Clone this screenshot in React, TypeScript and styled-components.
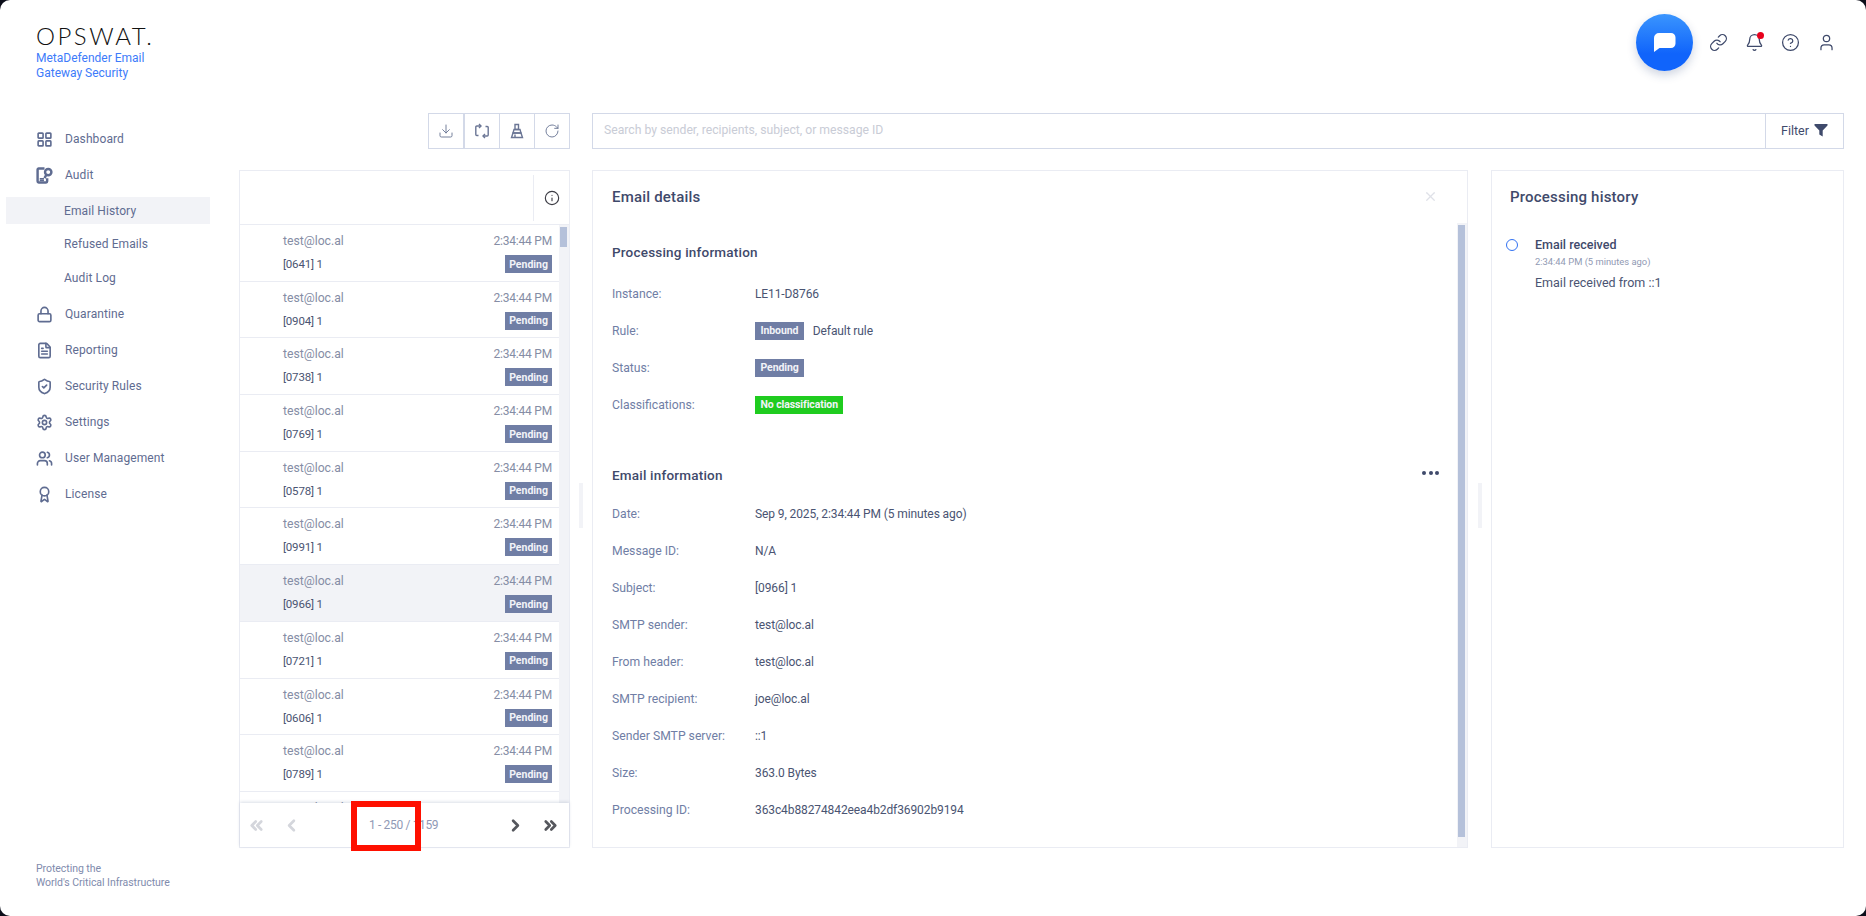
import React from 'react';
import styled, { createGlobalStyle } from 'styled-components';
import {
  LayoutGrid,
  Lock,
  FileText,
  ShieldCheck,
  Settings,
  Users,
  Award,
  Link,
  Bell,
  CircleHelp,
  User,
  Download,
  RotateCw,
  Info,
  X,
  ChevronLeft,
  ChevronRight,
  ChevronsLeft,
  ChevronsRight,
} from 'lucide-react';

const FONT = `Roboto, 'Liberation Sans', sans-serif`;

const GlobalStyle = createGlobalStyle`
  html, body { margin: 0; padding: 0; height: 100%; background: #0c0e1a; overflow: hidden; }
  * { box-sizing: border-box; }
  body { font-family: ${FONT}; }
`;

const Shell = styled.div`
  width: 1866px;
  height: 916px;
  background: #fff;
  border-radius: 10px;
  display: grid;
  grid-template-columns: 239px 1fr;
  overflow: hidden;
`;

/* sidebar */
const Sidebar = styled.aside`
  display: flex;
  flex-direction: column;
  height: 916px;
  padding: 0 29px 27px 6px;
`;

const Brand = styled.div`
  padding: 22px 0 0 30px;
  height: 121px;
`;

const BrandMark = styled.div`
  font-family: Lato, sans-serif;
  font-weight: 300;
  font-size: 24px;
  line-height: 28px;
  letter-spacing: 2.5px;
  color: #111;
  white-space: nowrap;
`;

const BrandProduct = styled.div`
  margin-top: 1px;
  font-size: 12px;
  line-height: 15px;
  color: #3d7bfa;
`;

const Nav = styled.nav`
  display: flex;
  flex-direction: column;
  flex: 1;
`;

const NavItem = styled.div`
  display: flex;
  align-items: center;
  gap: 12px;
  height: 36px;
  padding-left: 30px;
  font-size: 12px;
  color: #5f6c91;
  letter-spacing: 0.1px;
  svg { width: 17px; height: 17px; flex: none; stroke-width: 2.3; }
`;

const SubItem = styled.div<{ $active?: boolean }>`
  display: flex;
  align-items: center;
  height: 27px;
  margin: 0 0 6.5px;
  padding-left: 58px;
  font-size: 12px;
  color: #5f6c91;
  letter-spacing: 0.1px;
  background: ${(p) => (p.$active ? '#f2f3f7' : 'transparent')};
`;

const SubList = styled.div`
  display: flex;
  flex-direction: column;
  padding-top: 4px;
  margin-bottom: -1.5px;
`;

const Tagline = styled.div`
  padding-left: 30px;
  font-size: 10.5px;
  line-height: 13.5px;
  letter-spacing: -0.05px;
  color: #7f8bad;
`;

/* main */
const Main = styled.main`
  display: flex;
  flex-direction: column;
  height: 916px;
  padding-right: 22px;
  padding-bottom: 68px;
`;

const TopBar = styled.header`
  height: 113px;
  flex: none;
  display: flex;
  justify-content: flex-end;
  align-items: flex-start;
  padding-top: 14px;
`;

const ChatButton = styled.div`
  width: 57px;
  height: 57px;
  border-radius: 50%;
  background: linear-gradient(180deg, #3a95fe 0%, #1064fb 70%);
  box-shadow: 0 4px 10px rgba(30, 60, 120, 0.22);
  display: flex;
  align-items: center;
  justify-content: center;
  margin-right: 15px;
  svg { width: 23px; height: 21px; }
`;

const TopIcons = styled.div`
  display: flex;
  align-items: center;
  height: 57px;
  gap: 16px;
  padding-right: 8px;
`;

const TopIcon = styled.div`
  position: relative;
  width: 20px;
  height: 20px;
  display: flex;
  align-items: center;
  justify-content: center;
  color: #3f4a6b;
  svg { width: 19px; height: 19px; stroke-width: 1.6; }
`;

const NotifyDot = styled.span`
  position: absolute;
  top: -1px;
  right: 0;
  width: 7px;
  height: 7px;
  border-radius: 50%;
  background: #e8001c;
`;

const ToolRow = styled.div`
  display: grid;
  grid-template-columns: 331px 22px 1fr;
  height: 35px;
  flex: none;
  margin-bottom: 22px;
`;

const ToolGroup = styled.div`
  grid-column: 1;
  display: flex;
  justify-content: flex-end;
`;

const ToolButton = styled.div`
  width: 36px;
  height: 36px;
  border: 1px solid #d3d9e8;
  display: flex;
  align-items: center;
  justify-content: center;
  color: #6b7695;
  svg { width: 16px; height: 16px; stroke-width: 1.4; }
  & + & + & { margin-left: -1px; }
`;

const SearchBox = styled.div`
  grid-column: 3;
  display: flex;
  align-items: stretch;
  height: 36px;
  border: 1px solid #d3d9e8;
`;

const SearchText = styled.div`
  flex: 1;
  padding: 0 0 2px 11px;
  display: flex;
  align-items: center;
  font-size: 12.2px;
  color: #c9ccd6;
`;

const FilterButton = styled.div`
  width: 78px;
  padding-bottom: 2px;
  border-left: 1px solid #d3d9e8;
  display: flex;
  align-items: center;
  justify-content: center;
  gap: 5px;
  font-size: 12.5px;
  color: #3f4a6b;
  svg { width: 14px; height: 14px; }
`;

const Panels = styled.div`
  flex: 1;
  min-height: 0;
  display: grid;
  grid-template-columns: 331px 22px 1fr 23px 353px;
`;

const Panel = styled.section`
  border: 1px solid #eaecf3;
  min-height: 0;
  display: flex;
  flex-direction: column;
  position: relative;
`;

const Gutter = styled.div`
  display: flex;
  align-items: center;
  justify-content: center;
  padding-bottom: 8px;
  &::after {
    content: '';
    width: 4px;
    height: 45px;
    background: #f2f3f7;
  }
`;

/* list panel */
const ListHead = styled.div`
  height: 54px;
  flex: none;
  display: flex;
  justify-content: flex-end;
  align-items: center;
  border-bottom: 1px solid #eaecf3;
`;

const InfoCell = styled.div`
  width: 36px;
  height: 46px;
  border-left: 1px solid #eaecf3;
  display: flex;
  align-items: center;
  justify-content: center;
  color: #3d3d45;
  svg { width: 16px; height: 16px; stroke-width: 1.7; }
`;

const ListBody = styled.div`
  flex: 1;
  min-height: 0;
  display: grid;
  grid-template-columns: 1fr 10px;
  overflow: hidden;
`;

const Rows = styled.div`
  display: flex;
  flex-direction: column;
`;

const Row = styled.div<{ $selected?: boolean }>`
  height: 56.7px;
  flex: none;
  border-bottom: 1px solid #eaecf3;
  padding: 8px 7px 0 43px;
  display: grid;
  grid-template-columns: 1fr auto;
  grid-template-rows: 16px 30px;
  align-items: center;
  background: ${(p) => (p.$selected ? '#f2f3f7' : '#fff')};
`;

const RowSender = styled.div`
  font-size: 12.2px;
  color: #858da5;
`;

const RowTime = styled.div`
  font-size: 12px;
  letter-spacing: -0.2px;
  color: #858da5;
  text-align: right;
`;

const RowSubject = styled.div`
  font-size: 11.5px;
  letter-spacing: -0.2px;
  color: #4a5472;
`;

const Badge = styled.span<{ $green?: boolean }>`
  display: inline-flex;
  align-items: center;
  justify-content: center;
  height: 18px;
  padding: 0 5.5px;
  font-size: 10.5px;
  font-weight: 700;
  color: #f2f3f8;
  background: ${(p) => (p.$green ? '#1fcc1f' : '#707ea5')};
  white-space: nowrap;
`;

const RowBadge = styled(Badge)`
  justify-self: end;
  padding: 0 4px;
`;

const ScrollTrack = styled.div`
  background: #f2f3f7;
  padding: 2px 1px 0 1px;
`;

const ScrollThumb = styled.div<{ $h: number }>`
  width: 7px;
  height: ${(p) => p.$h}px;
  background: #b5c1da;
`;

const Pager = styled.footer`
  position: relative;
  flex: none;
  height: 44px;
  background: #fff;
  box-shadow: 0 -1px 3px rgba(112, 126, 165, 0.25);
  display: flex;
  align-items: center;
  padding: 0 9px 0 6px;
`;

const PagerIcon = styled.div<{ $off?: boolean; $gap?: number }>`
  width: 20px;
  display: flex;
  justify-content: center;
  color: ${(p) => (p.$off ? '#d4d6dc' : '#55575d')};
  margin-left: ${(p) => p.$gap ?? 0}px;
  svg { width: 19px; height: 19px; stroke-width: 3.4; }
`;

const PagerText = styled.div`
  position: absolute;
  left: 129px;
  top: 15px;
  font-size: 12px;
  letter-spacing: -0.35px;
  color: #8f99b5;
  white-space: nowrap;
`;

const Spacer = styled.div`
  flex: 1;
`;

const RedMark = styled.div`
  position: absolute;
  left: 111px;
  top: -2px;
  width: 70px;
  height: 50px;
  border: 6px solid #fe1000;
`;

/* details */
const PanelTitle = styled.h2`
  margin: 0;
  font-size: 15px;
  font-weight: 500;
  color: #3f4a6b;
  letter-spacing: 0.2px;
`;

const DetailsHead = styled.div`
  height: 52px;
  flex: none;
  display: flex;
  align-items: center;
  justify-content: space-between;
  padding: 0 29px 1px 19px;
  color: #dfe1e8;
  svg { width: 15px; height: 15px; }
`;

const DetailsBody = styled.div`
  flex: 1;
  min-height: 0;
  display: grid;
  grid-template-columns: 1fr 10px;
  overflow: hidden;
`;

const DetailsContent = styled.div`
  padding: 0 19px;
`;

const SectionHead = styled.div<{ $top: number; $bottom: number }>`
  display: flex;
  align-items: center;
  justify-content: space-between;
  height: 20px;
  margin-top: ${(p) => p.$top}px;
  margin-bottom: ${(p) => p.$bottom}px;
  font-size: 13.5px;
  font-weight: 500;
  color: #3f4a6b;
  letter-spacing: 0.2px;
`;

const MoreDots = styled.div`
  display: flex;
  gap: 2.5px;
  margin-right: -1px;
  margin-bottom: 4px;
  span {
    width: 4px;
    height: 4px;
    border-radius: 50%;
    background: #3f4a6b;
  }
`;

const InfoRow = styled.div`
  display: grid;
  grid-template-columns: 143px 1fr;
  align-items: center;
  height: 37px;
  font-size: 12.2px;
`;

const InfoLabel = styled.div`
  color: #707ea5;
`;

const InfoValue = styled.div`
  color: #4a5472;
  font-size: 12px;
  letter-spacing: -0.1px;
  display: flex;
  align-items: center;
  gap: 9px;
`;

/* history */
const HistoryHead = styled.div`
  height: 52px;
  flex: none;
  display: flex;
  align-items: center;
  padding: 0 18px 1px;
`;

const HistoryEvent = styled.div`
  display: grid;
  grid-template-columns: 29px 1fr;
  padding: 13px 14px 0;
`;

const EventDot = styled.span`
  width: 12px;
  height: 12px;
  margin-top: 3px;
  border-radius: 50%;
  border: 1.5px solid #3272f2;
`;

const EventTitle = styled.div`
  font-size: 12.5px;
  font-weight: 500;
  line-height: 18px;
  color: #3f4a6b;
`;

const EventTime = styled.div`
  font-size: 9.4px;
  line-height: 16px;
  color: #9099b3;
`;

const EventNote = styled.div`
  margin-top: 4px;
  font-size: 12.5px;
  line-height: 18px;
  color: #4a5472;
`;

const AuditIcon = () => (
  <svg viewBox="0 0 16 16" fill="none" stroke="currentColor" strokeWidth="1.6">
    <path d="M8 1.5H2.5a1 1 0 0 0-1 1v11a1 1 0 0 0 1 1h7a1 1 0 0 0 1-1v-3" />
    <circle cx="11.5" cy="4.8" r="3" />
    <path d="M9.6 7.5 8 10.5" />
    <path d="M3.5 11h4M3.5 12.8h4" strokeWidth="1.4" />
  </svg>
);

const SweepIcon = () => (
  <svg viewBox="0 0 16 16" fill="none" stroke="currentColor" strokeWidth="1.1">
    <path d="M6 1.500h3.500V6.500H6z" />
    <path d="M5 6.500h6l1 3.500H4z" />
    <path d="M4 10h8l1.500 4.500h-11z" />
    <path d="M6 11.500v3" />
  </svg>
);

const SwapIcon = () => (
  <svg viewBox="0 0 16 16" fill="none" stroke="currentColor" strokeWidth="1.2">
    <path d="M6.500 3H2.800a1 1 0 0 0-1 1v7.500a1 1 0 0 0 1 1h1.700" />
    <path d="M9.500 13h3.700a1 1 0 0 0 1-1V4.500a1 1 0 0 0-1-1h-1.700" />
    <path d="M5 1l2 2-2 2M11 11l-2 2 2 2" />
  </svg>
);

const FunnelIcon = () => (
  <svg viewBox="0 0 14 14" fill="currentColor">
    <path d="M0.500 1h13v1.500L8.700 7.500V13.500L5.300 11.500V7.500L0.500 2.500z" />
  </svg>
);

const ChatIcon = () => (
  <svg viewBox="0 0 23 21" fill="#fff">
    <path d="M6 1h12a4.500 4.500 0 0 1 4.500 4.500v6a4.500 4.500 0 0 1-4.500 4.500H6.500L1 20V6a5 5 0 0 1 5-5z" />
  </svg>
);

const rows = [
  { id: '0641' },
  { id: '0904' },
  { id: '0738' },
  { id: '0769' },
  { id: '0578' },
  { id: '0991' },
  { id: '0966', selected: true },
  { id: '0721' },
  { id: '0606' },
  { id: '0789' },
  { id: '0112' },
];

const emailInfo: [string, string][] = [
  ['Date:', 'Sep 9, 2025, 2:34:44 PM (5 minutes ago)'],
  ['Message ID:', 'N/A'],
  ['Subject:', '[0966] 1'],
  ['SMTP sender:', 'test@loc.al'],
  ['From header:', 'test@loc.al'],
  ['SMTP recipient:', 'joe@loc.al'],
  ['Sender SMTP server:', '::1'],
  ['Size:', '363.0 Bytes'],
  ['Processing ID:', '363c4b88274842eea4b2df36902b9194'],
];

export default function App() {
  return (
    <>
      <GlobalStyle />
      <Shell>
        <Sidebar>
          <Brand>
            <BrandMark>OPSWAT.</BrandMark>
            <BrandProduct>
              MetaDefender Email
              <br />
              Gateway Security
            </BrandProduct>
          </Brand>
          <Nav>
            <NavItem><LayoutGrid />Dashboard</NavItem>
            <NavItem><AuditIcon />Audit</NavItem>
            <SubList>
              <SubItem $active>Email History</SubItem>
              <SubItem>Refused Emails</SubItem>
              <SubItem>Audit Log</SubItem>
            </SubList>
            <NavItem><Lock />Quarantine</NavItem>
            <NavItem><FileText />Reporting</NavItem>
            <NavItem><ShieldCheck />Security Rules</NavItem>
            <NavItem><Settings />Settings</NavItem>
            <NavItem><Users />User Management</NavItem>
            <NavItem><Award />License</NavItem>
          </Nav>
          <Tagline>
            Protecting the
            <br />
            World's Critical Infrastructure
          </Tagline>
        </Sidebar>
        <Main>
          <TopBar>
            <ChatButton><ChatIcon /></ChatButton>
            <TopIcons>
              <TopIcon><Link /></TopIcon>
              <TopIcon><Bell /><NotifyDot /></TopIcon>
              <TopIcon><CircleHelp /></TopIcon>
              <TopIcon><User /></TopIcon>
            </TopIcons>
          </TopBar>
          <ToolRow>
            <ToolGroup>
              <ToolButton><Download /></ToolButton>
              <ToolButton><SwapIcon /></ToolButton>
              <ToolButton><SweepIcon /></ToolButton>
              <ToolButton><RotateCw /></ToolButton>
            </ToolGroup>
            <SearchBox>
              <SearchText>Search by sender, recipients, subject, or message ID</SearchText>
              <FilterButton>Filter <FunnelIcon /></FilterButton>
            </SearchBox>
          </ToolRow>
          <Panels>
            <Panel>
              <ListHead>
                <InfoCell><Info /></InfoCell>
              </ListHead>
              <ListBody>
                <Rows>
                  {rows.map((r) => (
                    <Row key={r.id} $selected={r.selected}>
                      <RowSender>test@loc.al</RowSender>
                      <RowTime>2:34:44 PM</RowTime>
                      <RowSubject>[{r.id}] 1</RowSubject>
                      <RowBadge>Pending</RowBadge>
                    </Row>
                  ))}
                </Rows>
                <ScrollTrack><ScrollThumb $h={20} /></ScrollTrack>
              </ListBody>
              <Pager>
                <PagerIcon $off><ChevronsLeft /></PagerIcon>
                <PagerIcon $off $gap={15}><ChevronLeft /></PagerIcon>
                <PagerText>1 - 250 / 1159</PagerText>
                <Spacer />
                <PagerIcon><ChevronRight /></PagerIcon>
                <PagerIcon $gap={15}><ChevronsRight /></PagerIcon>
                <RedMark />
              </Pager>
            </Panel>
            <Gutter />
            <Panel>
              <DetailsHead>
                <PanelTitle>Email details</PanelTitle>
                <X />
              </DetailsHead>
              <DetailsBody>
                <DetailsContent>
                  <SectionHead $top={19} $bottom={13}>Processing information</SectionHead>
                  <InfoRow><InfoLabel>Instance:</InfoLabel><InfoValue>LE11-D8766</InfoValue></InfoRow>
                  <InfoRow><InfoLabel>Rule:</InfoLabel><InfoValue><Badge>Inbound</Badge>Default rule</InfoValue></InfoRow>
                  <InfoRow><InfoLabel>Status:</InfoLabel><InfoValue><Badge>Pending</Badge></InfoValue></InfoRow>
                  <InfoRow><InfoLabel>Classifications:</InfoLabel><InfoValue><Badge $green>No classification</Badge></InfoValue></InfoRow>
                  <SectionHead $top={42} $bottom={10}>
                    Email information
                    <MoreDots><span /><span /><span /></MoreDots>
                  </SectionHead>
                  {emailInfo.map(([label, value]) => (
                    <InfoRow key={label}>
                      <InfoLabel>{label}</InfoLabel>
                      <InfoValue>{value}</InfoValue>
                    </InfoRow>
                  ))}
                </DetailsContent>
                <ScrollTrack><ScrollThumb $h={612} /></ScrollTrack>
              </DetailsBody>
            </Panel>
            <Gutter />
            <Panel>
              <HistoryHead>
                <PanelTitle>Processing history</PanelTitle>
              </HistoryHead>
              <HistoryEvent>
                <EventDot />
                <div>
                  <EventTitle>Email received</EventTitle>
                  <EventTime>2:34:44 PM (5 minutes ago)</EventTime>
                  <EventNote>Email received from ::1</EventNote>
                </div>
              </HistoryEvent>
            </Panel>
          </Panels>
        </Main>
      </Shell>
    </>
  );
}
